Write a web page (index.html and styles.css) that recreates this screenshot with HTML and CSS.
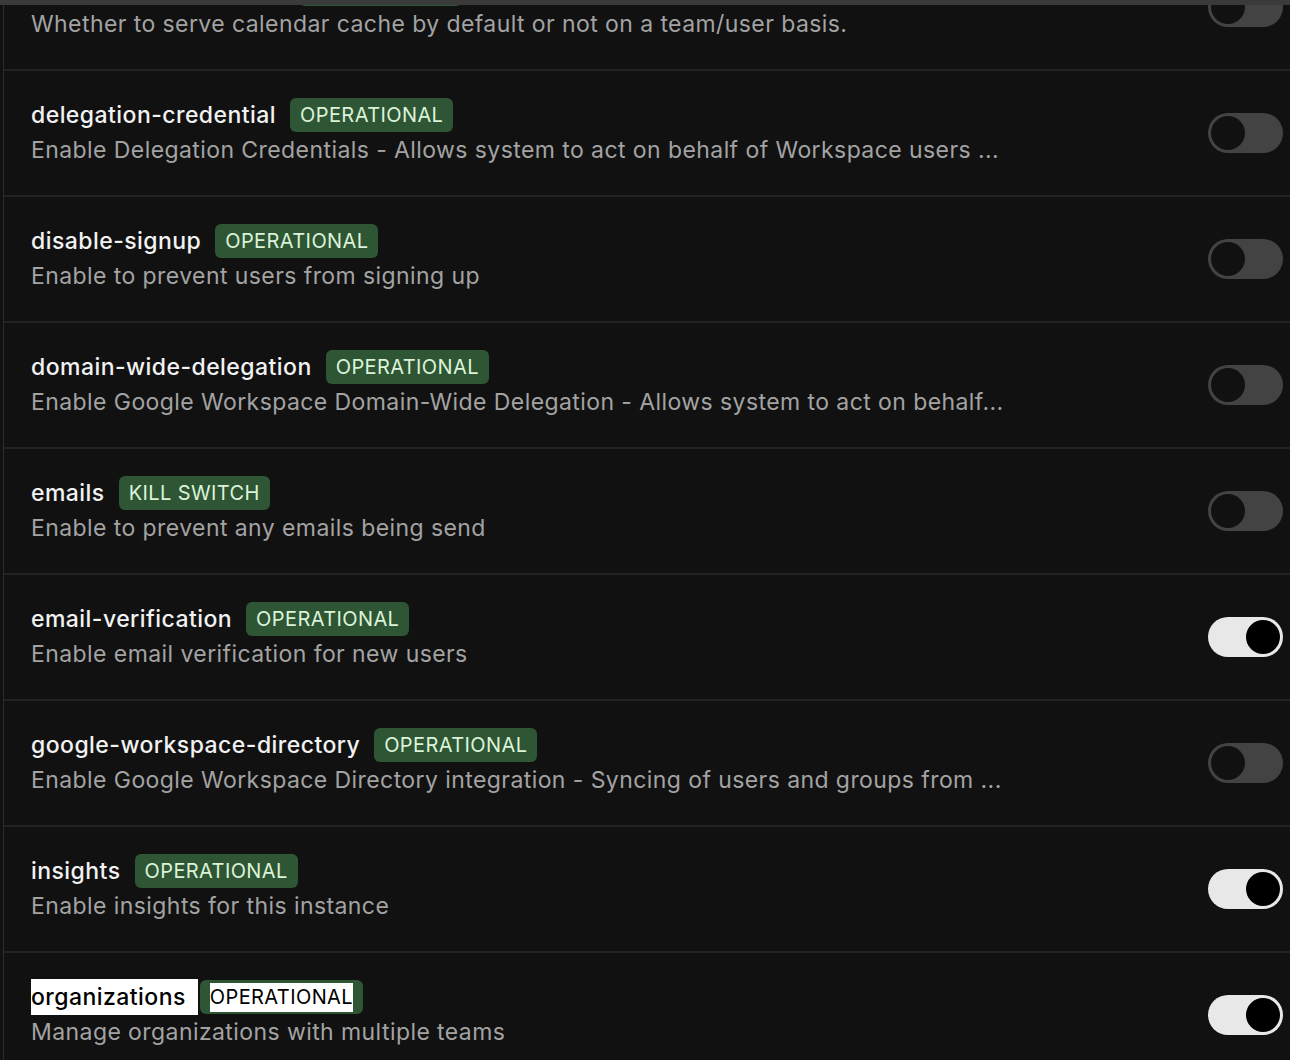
FILE: index.html
```html
<!DOCTYPE html>
<html lang="en">
<head>
<meta charset="utf-8">
<title>Feature flags</title>
<link rel="stylesheet" href="styles.css">
</head>
<body>
<div class="topbar"></div>
<main class="flags">
  <div class="row">
    <div class="info">
      <div class="head"><span class="name">calendar-cache-serve</span><span class="badge">OPERATIONAL</span></div>
      <div class="desc">Whether to serve calendar cache by default or not on a team/user basis.</div>
    </div>
    <span class="toggle"><span class="thumb"></span></span>
  </div>
  <div class="row">
    <div class="info">
      <div class="head"><span class="name">delegation-credential</span><span class="badge">OPERATIONAL</span></div>
      <div class="desc">Enable Delegation Credentials - Allows system to act on behalf of Workspace users ...</div>
    </div>
    <span class="toggle"><span class="thumb"></span></span>
  </div>
  <div class="row">
    <div class="info">
      <div class="head"><span class="name">disable-signup</span><span class="badge">OPERATIONAL</span></div>
      <div class="desc">Enable to prevent users from signing up</div>
    </div>
    <span class="toggle"><span class="thumb"></span></span>
  </div>
  <div class="row">
    <div class="info">
      <div class="head"><span class="name">domain-wide-delegation</span><span class="badge">OPERATIONAL</span></div>
      <div class="desc">Enable Google Workspace Domain-Wide Delegation - Allows system to act on behalf...</div>
    </div>
    <span class="toggle"><span class="thumb"></span></span>
  </div>
  <div class="row">
    <div class="info">
      <div class="head"><span class="name">emails</span><span class="badge">KILL SWITCH</span></div>
      <div class="desc">Enable to prevent any emails being send</div>
    </div>
    <span class="toggle"><span class="thumb"></span></span>
  </div>
  <div class="row">
    <div class="info">
      <div class="head"><span class="name">email-verification</span><span class="badge">OPERATIONAL</span></div>
      <div class="desc">Enable email verification for new users</div>
    </div>
    <span class="toggle on"><span class="thumb"></span></span>
  </div>
  <div class="row">
    <div class="info">
      <div class="head"><span class="name">google-workspace-directory</span><span class="badge">OPERATIONAL</span></div>
      <div class="desc">Enable Google Workspace Directory integration - Syncing of users and groups from ...</div>
    </div>
    <span class="toggle"><span class="thumb"></span></span>
  </div>
  <div class="row">
    <div class="info">
      <div class="head"><span class="name">insights</span><span class="badge">OPERATIONAL</span></div>
      <div class="desc">Enable insights for this instance</div>
    </div>
    <span class="toggle on"><span class="thumb"></span></span>
  </div>
  <div class="row">
    <div class="info">
      <div class="head"><span class="name sel">organizations</span><span class="badge"><span class="sel">OPERATIONAL</span></span></div>
      <div class="desc">Manage organizations with multiple teams</div>
    </div>
    <span class="toggle on"><span class="thumb"></span></span>
  </div>
</main>
</body>
</html>
```
FILE: styles.css
```css
html, body {
  margin: 0;
  padding: 0;
  background: #111111;
  overflow: hidden;
}
body {
  font-family: Inter, "Noto Sans", sans-serif;
  height: 1060px;
}
.topbar {
  position: fixed;
  top: 0;
  left: 0;
  right: 0;
  height: 5px;
  background: #3a3a3a;
  z-index: 5;
}
.flags {
  margin: -55px 0 0 3px;
  border-left: 1px solid #2b2b2b;
}
.row {
  display: flex;
  align-items: center;
  justify-content: space-between;
  height: 124px;
  padding: 0 7px 0 27px;
  border-bottom: 2px solid #232323;
}
.info {
  display: flex;
  flex-direction: column;
  gap: 2px;
  padding-bottom: 2px;
}
.head {
  display: flex;
  align-items: center;
  gap: 14px;
  height: 34px;
}
.name {
  font-size: 23px;
  font-weight: 500;
  color: #f2f2f2;
  letter-spacing: 0.45px;
}
.name.sel {
  background: #ffffff;
  color: #000000;
  line-height: 36px;
  padding-right: 12px;
  margin-right: -12px;
}
.badge {
  display: inline-flex;
  align-items: center;
  height: 34px;
  padding: 0 10px;
  border-radius: 6px;
  background: #2f5634;
  color: #dcf3da;
  font-size: 20px;
  font-weight: 400;
  letter-spacing: 0.4px;
}
.badge .sel {
  background: #ffffff;
  color: #000000;
  line-height: 29px;
}
.desc {
  font-size: 23px;
  color: #a3a3a3;
  line-height: 32px;
  letter-spacing: 0.42px;
}
.toggle {
  display: flex;
  align-items: center;
  width: 75px;
  height: 40px;
  box-sizing: border-box;
  padding: 3px;
  border-radius: 20px;
  background: #434343;
  flex-shrink: 0;
}
.thumb {
  width: 34px;
  height: 34px;
  border-radius: 50%;
  background: #111111;
}
.toggle.on {
  background: #e8e8e8;
  justify-content: flex-end;
}
.toggle.on .thumb {
  background: #000000;
}
```
